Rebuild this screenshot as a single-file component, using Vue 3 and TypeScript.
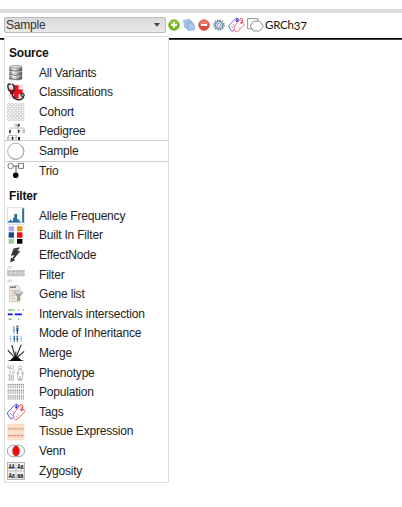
<script setup lang="ts">
import { ref } from 'vue'

interface Item { label: string; icon: string }
interface Group { title: string; items: Item[] }

const repeat = (xs: number[], ys: number[], draw: (x: number, y: number) => string): string =>
  ys.map(y => xs.map(x => draw(x, y)).join('')).join('')

const tags = `
  <g fill="#fff" stroke-width="1" stroke-linejoin="round">
    <path d="M.8 9.2 7.6 2.2Q10 .3 11.2 2.2L12 7.2 5.2 15.6Q4 16.6 3 15.2L.6 11Q.1 10 .8 9.2Z" stroke="#5a50e0"/>
    <path d="M6.2 11.2 7 15.4Q8.2 17.8 10.2 16.3L17.4 9.4Q18.2 8.3 17.2 7.3L14 3.4Q12.8 2 11.4 4.2Z" stroke="#f4656c"/>
  </g>
  <path d="M5 7.8 8 11M3.2 10l2.6 3" stroke="#9d95ee" stroke-width=".8"/>
  <path d="M10 10.6l3 2.5M9 13l1.8 1.6" stroke="#f8a6aa" stroke-width=".8"/>
  <path d="M8.6 3.4Q10.5.4 9.9 5.2" fill="none" stroke="#2420b8" stroke-width=".9"/>
  <path d="M13.2 1.8q3-1.4 2.6 3.4" fill="none" stroke="#e02030" stroke-width=".9"/>
  <circle cx="9.2" cy="4.6" r="1" fill="#2420b8"/><circle cx="14.6" cy="6.6" r="1.2" fill="#e02030"/>`

const icons: Record<string, string> = {
  tags,
  database: `
    <defs><linearGradient id="metal"><stop offset="0" stop-color="#777"/><stop offset=".35" stop-color="#eee"/><stop offset=".65" stop-color="#aaa"/><stop offset="1" stop-color="#555"/></linearGradient></defs>
    <path d="M2.3 3C2.3.6 15.1.6 15.1 3V14.6C15.1 17.2 2.3 17.2 2.3 14.6Z" fill="url(#metal)"/>
    <ellipse cx="8.7" cy="2.8" rx="6" ry="1.5" fill="#ccc" stroke="#999" stroke-width=".5"/>
    <path d="M2.3 6.2q6.4 2 12.8 0M2.3 10.4q6.4 2 12.8 0M2.3 14.4q6.4 2 12.8 0" stroke="#4d4d4d" stroke-width=".8" fill="none"/>
    <path d="M2.3 7.2q6.4 2 12.8 0M2.3 11.4q6.4 2 12.8 0" stroke="#eee" stroke-width=".5" fill="none"/>`,
  stethoscope: `
    <rect x="2" y="1.6" width="14.5" height="14.5" rx="1" fill="#fbdede"/>
    <path d="M7 2.2h4.6v4.2h4v4.8h-4v4.2H7v-4.2H3V6.4h4Z" fill="#e3141c"/>
    <path d="M3.2 1.2Q.8.4.9 3.2 1.2 8.2 5 9.2 8 8.6 6.8 2.6L5.4 1.2M5 9.2Q4.8 14.8 9.8 16.4 14.8 17.6 16.6 14" fill="none" stroke="#2b2528" stroke-width="1.5" stroke-linecap="round"/>
    <circle cx="15.6" cy="12" r="1.7" fill="#999" stroke="#222"/>`,
  cohort: repeat([1.7, 5.2, 8.7, 12.2, 15.7], [1.8, 5.5, 9.2, 12.9, 16.4], (x, y) =>
    `<circle cx="${x}" cy="${y}" r="1.35" fill="#fff" stroke="${(x + y) % 2 > 1 ? '#bfaeae' : '#b0bbbb'}" stroke-width=".7"/>`),
  pedigree: `
    <path d="M8.5 2.3h4M10.4 2.3V5M3 5h14M3 5v3.5M10.8 5v3.5M17 5v3M3 8.5v4M1.5 12.5h8M1.5 12.5V15M5.5 12.5V15M9.3 12.5V15" fill="none" stroke="#999" stroke-width=".6"/>
    <circle cx="8.6" cy="2.2" r="1.2" fill="#fff" stroke="#777" stroke-width=".5"/><path d="M10.8.8h1.8v2.8h-1.8Z" fill="#333"/>
    <path d="M2.2 7.2h1.6v2.6H2.2ZM11 7h1.5v2.8H11ZM4.7 14h1.6v2.8H4.7ZM11 14h2v3h-2Z" fill="#111"/>
    <g fill="#fff" stroke="#777" stroke-width=".5"><path d="M15.8 7.3h1.6v2.5h-1.6ZM.5 14h1.6v2.6H.5Z"/><circle cx="9" cy="15.4" r="1.1"/></g>`,
  circle: `<circle cx="8.8" cy="9.3" r="8.1" fill="#fff" stroke="#999" stroke-width=".8"/><path d="M14.6 3.6A8.1 8.1 0 0 1 3.1 15" fill="none" stroke="#aaa" stroke-width="1.1"/>`,
  trio: `<path d="M6.5 4H12M9 4v7" stroke="#333" stroke-width=".8"/><circle cx="3.6" cy="4" r="2.7" fill="#fff" stroke="#555" stroke-width=".8"/><path d="M11.6 1.4h4.9v5h-4.9Z" fill="#fff" stroke="#555" stroke-width=".8"/><circle cx="8.7" cy="13.3" r="2.8" fill="#000"/>`,
  histogram: `<rect x=".3" y=".3" width="17" height="17" fill="#fff" stroke="#ccc" stroke-width=".6"/><path d="M1.3 15.4V14h1.5v-1.2h1.7V14h1.6v-3.2h1.2V7h2.8v5h1.3v1.5h1.8v1.9ZM15.2 1.3h1.8v14.1h-1.8Z" fill="#246fa5"/><path d="M1 15.5h16" stroke="#679fc7" stroke-width=".6"/><path d="M3 16.4v.7m3.5-.7v.7m3.5-.7v.7m3.5-.7v.7" stroke="#aaa" stroke-width=".7"/>`,
  blocks: `<path fill="#a9a9f5" d="M1.6.3H7v5H1.6Z"/><path fill="#ef920c" d="M10 .3h5.4v5H10Z"/><path fill="#174b92" d="M1.6 6.3H7v5.4H1.6Z"/><path fill="#f4060b" d="M10 6.3h5.4v5.4H10Z"/><path fill="#98ce91" d="M1.6 12.9H7v4.8H1.6Z"/><path fill="#000" d="M10 12.9h5.4v4.8H10Z"/>`,
  bolt: `<path d="M6.6 2.6 12.9 1.3 10.6 5.3 13.6 4.8 6.9 13 8.2 14.2 3.2 16.4 4 11.3 5.2 12.4 7.6 9.3 3.9 9.8Z" fill="#343638"/><path d="M7.5 4.6 11 3.3" stroke="#777" stroke-width=".5"/>`,
  filterBoxes: `
    <path d="M.5.7h5M.5 2.3h3.6" stroke="#bbb" stroke-width=".7"/>
    ${repeat([.6, 5, 9.4, 13.8], [4.2, 7.6], (x, y) => `<rect x="${x}" y="${y}" width="3.7" height="2.4" fill="#e8e8e8" stroke="#aaa" stroke-width=".5"/><path d="M${x + .7} ${y + 1.2}h2.3" stroke="#777" stroke-width=".6"/>`)}
    <rect x=".7" y="14" width="4" height="1.8" rx=".7" fill="#eee" stroke="#bbb" stroke-width=".5"/>`,
  geneList: `
    <path d="M2.3 1.1 10.8.4 13 3.1V16.3L2.7 16.8Z" fill="#eee9da" stroke="#c2bba8" stroke-width=".7"/>
    <path d="M3.4 2.5 9 2" stroke="#514c42" stroke-width="1.3" stroke-dasharray="1.2 .4"/>
    <path d="M4 5.5h6M4 8h3M4 10.6h4M4 13.2h4" stroke="#b9b29e" stroke-width=".7"/>
    <path d="M6.8 7.2q4.7-2.8 9.4 0l-3.6 4.1v3.6l-2.1.8v-4.4Z" fill="#a3a3a3" stroke="#777" stroke-width=".6"/><ellipse cx="11.5" cy="7.3" rx="4.2" ry="1.3" fill="#d8d8d8"/>`,
  intervals: `<path d="M1.4 5h4.2M6.5 5h1.2M11 5h1.1M15.7 5h1.2M1.6 14.2h3.2M11 14.2h1.4" stroke="#5db043" stroke-width="1.4" stroke-dasharray="1.1 .4"/><path d="M.8 9.4h4.8M7.8 9.4h7" stroke="#0910e3" stroke-width="1.8"/>`,
  inheritance: `
    <g fill="#8aaed0"><circle cx="6.8" cy="2" r="1"/><path d="M5.8 3.2h2l.5 3-1 .3v2H6.1v-2.2Z"/></g>
    <g fill="#255d91"><circle cx="10.4" cy="1.5" r="1.1"/><path d="M9.3 2.8h2.2v3.5H11v2.8H9.7V6.3h-.4Z"/></g>
    ${[3.4, 7.3, 10.3, 14.2].map((x, i) => `<g fill="${i === 1 || i === 2 ? '#416e9b' : '#afcbe2'}"><circle cx="${x}" cy="11.5" r=".9"/><path d="M${x - .9} 12.6h1.8v2.4h-.4v2.2h-1V15h-.4Z"/></g>`).join('')}`,
  merge: `<path d="M8.8 14V7.5M8 14 .8 6.2M8.3 13.5 4.8.8M9.1 13.5 14.2.6M9.6 14l7.5-6.6" stroke="#222" stroke-width="1.05"/><path d="M.4 17Q4 16.3 5.4 13.9q3.4-2.3 6.8 0Q13.6 16.3 17.3 17Z" fill="#080808"/>`,
  phenotype: `
    <g fill="none" stroke="#ababab" stroke-width=".8"><circle cx="4.9" cy="3" r="1.6"/><path d="M4 4.8 1 4 .8 1.5M6 5 8 7.8 6.8 9 5.9 8l.7 8.2H5L4.6 11l-1.2 5.4-1.5-.2L3 9.8 3.2 6"/><circle cx="13" cy="3.5" r="1.6"/><path d="M12 5.4 10 10l1.2.4.6-2-1.1 4 .5 4h1.3l.6-4 .6 4H15l.7-4-.9-4 .9 2 1-.6-2.5-4.4Z"/><path d="M1 2l1-.8M.8 3.8l2-.2M1 11l2 .3M11 15.5h4"/></g>`,
  population: repeat([1.2, 3.1, 5, 6.9, 8.8, 10.7, 12.6, 14.5, 16.4], [1.5, 7.2, 13], (x, y) =>
    `<circle cx="${x}" cy="${y}" r=".7" fill="#888"/><path d="M${x - .6} ${y + 1}h1.2l-.2 3h-.8Z" fill="#b0b0b0"/>`),
  tissue: `<rect x=".4" y=".8" width="17" height="16.5" fill="#fbd9c4"/><path d="M.4 3h17M.4 9.2h17M.4 15.8h17" stroke="#fce7da" stroke-width="1.2"/>${repeat([2.2, 5.3, 8.5, 11.7, 15], [5.9, 12.7], (x, y) => `<path d="M${x - .8} ${y - .5}l.8 1 .9-1.1" fill="none" stroke="#c66a4d" stroke-width=".9"/>`)}`,
  venn: `<g fill="#fff" stroke="#858585" stroke-width=".8"><ellipse cx="6.6" cy="9" rx="6.2" ry="5.9"/><ellipse cx="11.3" cy="9" rx="6.2" ry="5.9" fill="none"/></g><ellipse cx="9" cy="9" rx="3.3" ry="4.9" fill="#f30707"/>`,
  zygosity: `<rect x=".4" y=".4" width="17.2" height="17" fill="#f0f0f0" stroke="#999" stroke-width=".7"/><path d="M9 .5v17M.5 9h17" stroke="#aaa" stroke-width=".7"/><g font-family="Liberation Sans, sans-serif" font-size="7.2" font-weight="700" letter-spacing="0" fill="#151515"><text x="1.4" y="7.3" textLength="6.4" lengthAdjust="spacingAndGlyphs">AA</text><text x="10.2" y="7.3" textLength="6.2" lengthAdjust="spacingAndGlyphs">Aa</text><text x="1.4" y="15.8" textLength="6.2" lengthAdjust="spacingAndGlyphs">Aa</text><text x="10.2" y="15.8" textLength="6.2" lengthAdjust="spacingAndGlyphs">aa</text></g>`,
}

const groups: Group[] = [
  { title: 'Source', items: [
    { label: 'All Variants', icon: 'database' },
    { label: 'Classifications', icon: 'stethoscope' },
    { label: 'Cohort', icon: 'cohort' },
    { label: 'Pedigree', icon: 'pedigree' },
    { label: 'Sample', icon: 'circle' },
    { label: 'Trio', icon: 'trio' },
  ] },
  { title: 'Filter', items: [
    { label: 'Allele Frequency', icon: 'histogram' },
    { label: 'Built In Filter', icon: 'blocks' },
    { label: 'EffectNode', icon: 'bolt' },
    { label: 'Filter', icon: 'filterBoxes' },
    { label: 'Gene list', icon: 'geneList' },
    { label: 'Intervals intersection', icon: 'intervals' },
    { label: 'Mode of Inheritance', icon: 'inheritance' },
    { label: 'Merge', icon: 'merge' },
    { label: 'Phenotype', icon: 'phenotype' },
    { label: 'Population', icon: 'population' },
    { label: 'Tags', icon: 'tags' },
    { label: 'Tissue Expression', icon: 'tissue' },
    { label: 'Venn', icon: 'venn' },
    { label: 'Zygosity', icon: 'zygosity' },
  ] },
]

const selected = ref('Sample')
</script>

<template>
  <main class="page">
    <div class="strip"></div>
    <header class="toolbar">
      <div class="select">
        <span>{{ selected }}</span>
        <svg class="caret" viewBox="0 0 6 4"><path d="M0 0h6L3 3.8Z" /></svg>
      </div>
      <div class="tools">
        <svg class="tool" viewBox="0 0 12 12">
          <circle cx="6" cy="6" r="5.3" fill="#76b51b" stroke="#5e9b0c" stroke-width=".7" />
          <path d="M1.5 5Q2.2 1.4 6 1.3T10.5 5Z" fill="#a5d34f" opacity=".6" />
          <path d="M6 3v6M3 6h6" stroke="#fff" stroke-width="1.8" />
        </svg>
        <svg class="tool" viewBox="0 0 12 12">
          <g stroke="#759bd3" stroke-width=".7">
            <path d="M.6 1.2 6.8.5 7.7 7.5 1.5 8.3Z" fill="#c5daf6" />
            <path d="M2.5 2.6 8.6 1.9 9.6 9 3.5 9.7Z" fill="#b7d0f2" />
            <path d="M4.4 4 9.3 3.4 11 5 11.6 10.7 5.2 11.5Z" fill="#a8c6ee" />
          </g>
        </svg>
        <svg class="tool" viewBox="0 0 12 12">
          <circle cx="6" cy="6" r="5.3" fill="#df4b35" stroke="#c84634" stroke-width=".7" />
          <path d="M1.5 5Q2.2 1.4 6 1.3T10.5 5Z" fill="#f29480" opacity=".6" />
          <path d="M2.8 6h6.4" stroke="#fff" stroke-width="2" />
        </svg>
        <svg class="tool" viewBox="0 0 12 12">
          <circle cx="6" cy="6" r="4.9" fill="none" stroke="#63788f" stroke-width="1.4" stroke-dasharray="1.55 1" />
          <circle cx="6" cy="6" r="3.6" fill="#d4e0ec" stroke="#8196ac" stroke-width="1.3" />
          <circle cx="6" cy="6" r="1.6" fill="#f7f9fb" stroke="#8fa3b6" stroke-width=".7" />
        </svg>
        <svg class="tool-tags" viewBox="0 0 18 18" v-html="icons.tags"></svg>
        <svg class="shapes" viewBox="0 0 17 14">
          <g fill="#fff" stroke="#777" stroke-width=".8">
            <path d="M.6.6h10.2v10.2H.6Z" />
            <path d="M6.5 3.2h6.2L16.3 8l-3.5 5H6.5L3.2 8Z" stroke-linejoin="round" />
          </g>
        </svg>
        <span class="build">GRCh<span class="low">37</span></span>
      </div>
    </header>
    <div class="rule"></div>

    <nav class="menu">
      <section v-for="group in groups" :key="group.title">
        <h2 class="title">{{ group.title }}</h2>
        <ul class="list">
          <li
            v-for="item in group.items"
            :key="item.label"
            class="item"
            :class="{ active: item.label === selected }"
            @click="selected = item.label"
          >
            <svg class="icon" viewBox="0 0 18 18" v-html="icons[item.icon]"></svg>
            <span class="label">{{ item.label }}</span>
          </li>
        </ul>
      </section>
    </nav>
  </main>
</template>

<style>
body { background: #fff; }
</style>

<style scoped>
.page {
  position: relative;
  height: 507px;
  padding-top: 9px;
  box-sizing: border-box;
  overflow: hidden;
  font-family: "Liberation Sans", Arial, sans-serif;
  font-size: 12px;
  letter-spacing: -.2px;
  color: #222;
}
.strip { height: 4px; background: #ddd; }
.toolbar {
  display: flex;
  align-items: center;
  box-sizing: border-box;
  height: 25px;
  padding: 0 0 1px 4px;
}
.select {
  display: flex;
  align-items: center;
  justify-content: space-between;
  box-sizing: border-box;
  width: 162px;
  height: 16px;
  padding: 0 5px 0 1px;
  border: 1px solid #bbb;
  border-radius: 2px;
  background: linear-gradient(#dadada, #e9e9e9);
  color: #333;
}
.caret { width: 6px; height: 4px; fill: #444; }
.tools { display: flex; align-items: center; padding: 0 0 1px 2px; }
.tool { width: 12px; height: 12px; margin-right: 3px; }
.tool-tags { width: 17px; height: 16px; margin: 1px 2px 0 0; }
.shapes { width: 17px; height: 14px; }
.build {
  padding-left: 1px;
  font-family: Lato, sans-serif;
  font-size: 11.5px;
  letter-spacing: -.2px;
  line-height: 16px;
  color: #111;
}
.low { position: relative; top: 1px; }
.rule { height: 1px; background: #000; border-bottom: 1px solid #444; }
.menu {
  position: absolute;
  left: 4px;
  top: 36px;
  box-sizing: border-box;
  width: 165px;
  height: 447px;
  padding-top: .4px;
  border: 1px solid #ddd;
  border-radius: 2px;
  background: #fff;
}
.title {
  box-sizing: border-box;
  height: 25.5px;
  margin: 0;
  padding: 5.5px 0 0 4px;
  font-size: 12px;
  line-height: 20px;
  color: #111;
}
.list { margin: 0; padding: 0; list-style: none; }
.item {
  display: flex;
  align-items: center;
  gap: 14px;
  box-sizing: border-box;
  height: 19.62px;
  padding-left: 2px;
  line-height: 19px;
}
.label { padding-top: .8px; }
.active { box-shadow: 0 -1px #ccc, 0 1px #ccc; }
.icon { flex: none; width: 18px; height: 18px; }
</style>
